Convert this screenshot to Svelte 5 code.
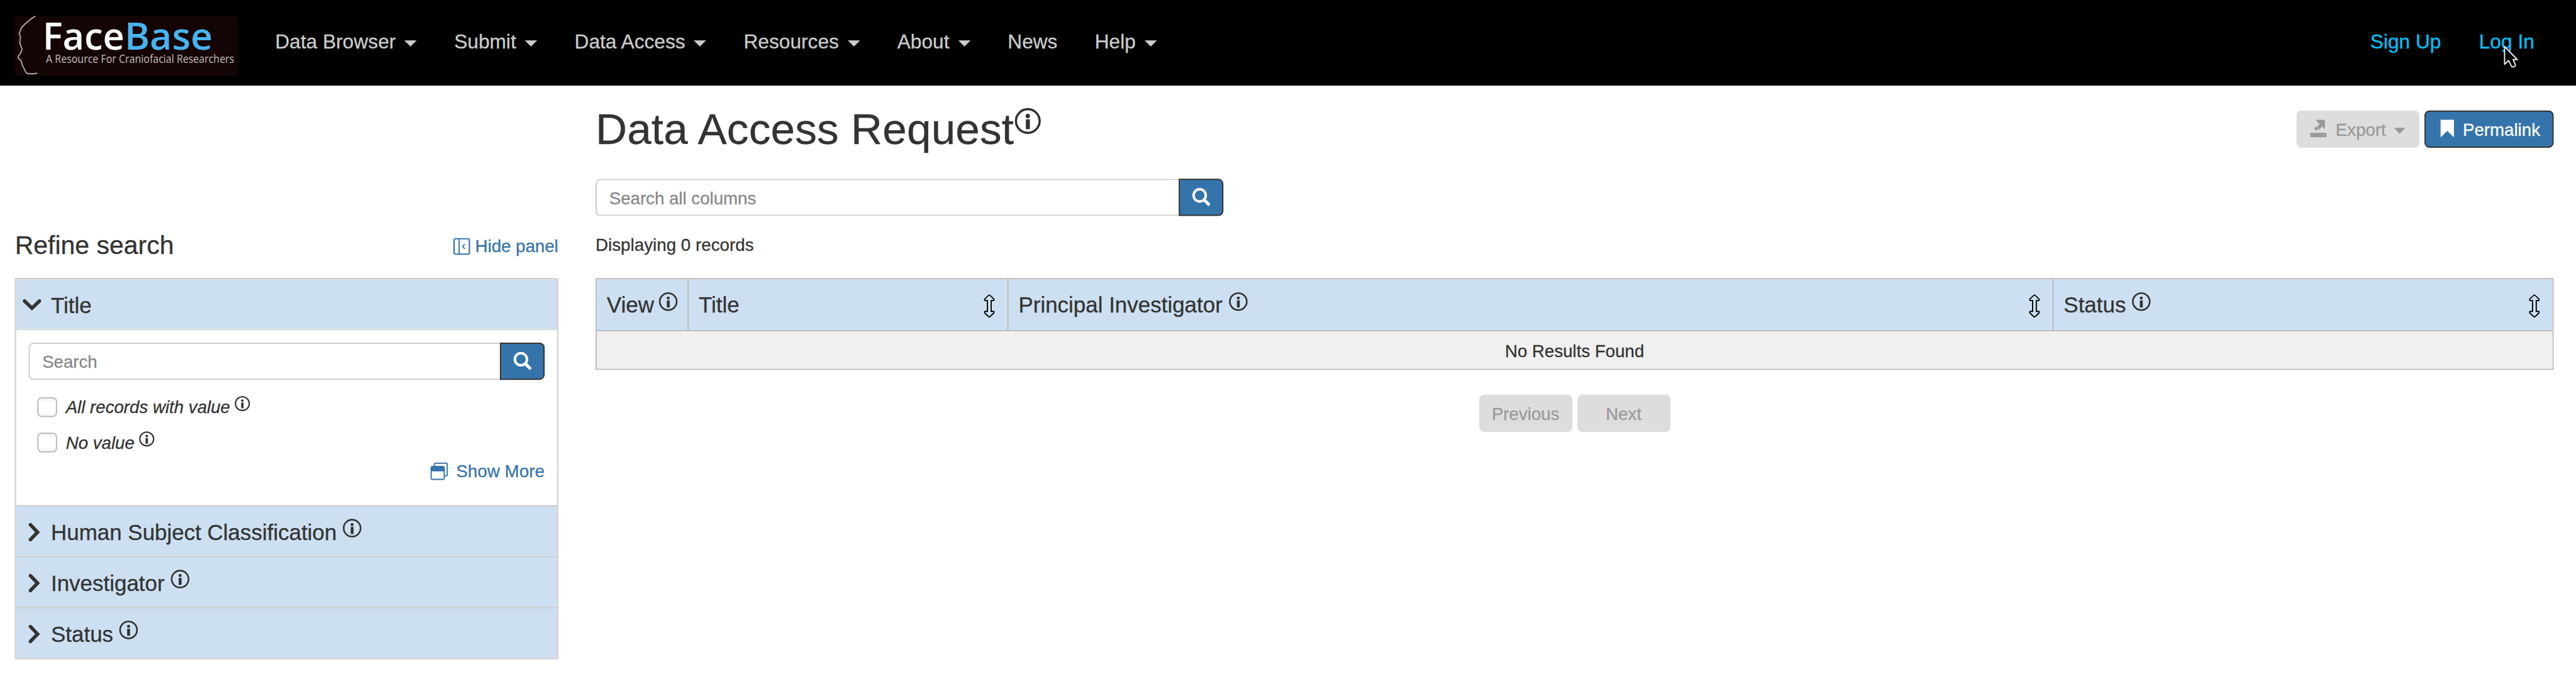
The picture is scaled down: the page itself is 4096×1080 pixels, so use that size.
<script>
  const menu = [
    { label: 'Data Browser', drop: true },
    { label: 'Submit', drop: true },
    { label: 'Data Access', drop: true },
    { label: 'Resources', drop: true },
    { label: 'About', drop: true },
    { label: 'News', drop: false },
    { label: 'Help', drop: true }
  ];
  const choices = ['All records with value', 'No value'];
  const closedFacets = ['Human Subject Classification', 'Investigator', 'Status'];
  const columns = [
    { label: 'View', info: true, sort: false },
    { label: 'Title', info: false, sort: true },
    { label: 'Principal Investigator', info: true, sort: true },
    { label: 'Status', info: true, sort: true }
  ];
</script>

{#snippet info(size)}
  <svg class="info {size}" viewBox="0 0 24 24">
    <circle cx="12" cy="12" r="10.9" fill="none" stroke="currentColor" stroke-width="2.1" />
    <circle cx="12" cy="7.4" r="2" fill="currentColor" />
    <path d="M10.2 10.4h3.7v9.1h-3.7z" fill="currentColor" />
  </svg>
{/snippet}

{#snippet searchButton()}
  <button class="search-btn" aria-label="Search">
    <svg width="29" height="29" viewBox="0 0 29 29">
      <circle cx="11.8" cy="11.8" r="9.8" fill="none" stroke="#fff" stroke-width="4" />
      <path d="M19 19l7 7" stroke="#fff" stroke-width="5" stroke-linecap="round" />
    </svg>
  </button>
{/snippet}

<div class="page">
  <header>
    <svg class="logo" width="360" height="96" viewBox="0 0 360 96">
      <rect width="360" height="96" fill="#140504" />
      <path
        d="M33 0C27 3 22 8 17 12C13 16 9 19 8.500 24L7 28L9 33L8 42L9 47L11.500 53L10 58L6 64L5 67L10 72L12 79L15 85L18 91C21 94 30 93 36 92"
        fill="none" stroke="#aaa5a3" stroke-width="2" stroke-linejoin="round" />
      <g class="brand">
        <text class="name" x="44.500" y="54.500" font-size="60" textLength="132" lengthAdjust="spacingAndGlyphs" fill="#fff">Face</text>
        <text class="name" x="176.500" y="54.500" font-size="60" textLength="142" lengthAdjust="spacingAndGlyphs" fill="#48b4f0">Base</text>
        <text class="tagline" x="50" y="75.500" font-size="19" textLength="303" lengthAdjust="spacingAndGlyphs" fill="#c4bfbd">A Resource For Craniofacial Researchers</text>
      </g>
    </svg>
    <nav>
      {#each menu as item}
        <a href="#top">{item.label}{#if item.drop}<span class="caret"></span>{/if}</a>
      {/each}
    </nav>
    <div class="account">
      <a href="#signup">Sign Up</a>
      <a href="#login">Log In
        <svg class="cursor" width="25" height="38" viewBox="-2 -2 25 38">
          <path d="M0 0V28.500L6.500 22.500L11 31.500Q12.500 33.500 15.500 32.500Q18 31 17.200 29L13.800 21H20.500Z"
            fill="#000" stroke="#e8e8e8" stroke-width="2" stroke-linejoin="round" />
        </svg>
      </a>
    </div>
  </header>

  <main>
    <aside>
      <div class="refine">
        <h2>Refine search</h2>
        <a class="action" href="#hide">
          <svg width="27" height="28" viewBox="0 0 27 28">
            <rect x="1.200" y="1.700" width="24.600" height="24.800" rx="2.500" fill="none" stroke="currentColor" stroke-width="2.200" />
            <path d="M9.300 2v24" stroke="currentColor" stroke-width="2" />
            <path d="M18.500 10.500l-3.600 3.700l3.600 3.700" fill="none" stroke="currentColor" stroke-width="1.800" />
          </svg>Hide panel
        </a>
      </div>

      <section class="facets">
        <div class="facet open">
          <svg class="down" width="31" height="20" viewBox="0 0 31 20">
            <path d="M3.500 4L15.500 15.500L27.500 4" fill="none" stroke="currentColor" stroke-width="5.600" stroke-linecap="round" />
          </svg>
          <span>Title</span>
        </div>
        <div class="facet-body">
          <div class="search">
            <input placeholder="Search" />
            {@render searchButton()}
          </div>
          <div class="choices">
            {#each choices as choice}
              <label><span class="box"></span><em>{choice}</em>{@render info('small')}</label>
            {/each}
          </div>
          <a class="action more" href="#more">
            <svg width="29" height="29" viewBox="0 0 29 29">
              <path d="M6.500 6V3.500Q6.500 1.300 8.700 1.300H25Q27.200 1.300 27.200 3.500V19.500Q27.200 21.700 25 21.700H23" fill="none" stroke="currentColor" stroke-width="2" />
              <rect x="1.300" y="6.500" width="21" height="20.800" rx="2.200" fill="none" stroke="currentColor" stroke-width="2" />
              <path d="M1.300 14.500V8Q1.300 6.300 3 6.300H20.500Q22.300 6.300 22.300 8V14.500Z" fill="currentColor" />
            </svg>Show More
          </a>
        </div>
        {#each closedFacets as facet}
          <div class="facet">
            <svg class="right" width="20" height="31" viewBox="0 0 20 31">
              <path d="M4 3.500L15.500 15.500L4 27.500" fill="none" stroke="currentColor" stroke-width="5.600" stroke-linecap="round" />
            </svg>
            <span>{facet}</span>{@render info('medium')}
          </div>
        {/each}
      </section>
    </aside>

    <section class="content">
      <div class="title-row">
        <h1>Data Access Request{@render info('large')}</h1>
        <div class="buttons">
          <button class="btn disabled export">
            <svg width="27" height="29" viewBox="0 0 27 29">
              <path d="M8.500 0H22.300Q23.700 0 23.700 1.400V15.500L19.300 11.200L14.700 15.800L10.700 11.700L15.200 7.100Z" fill="currentColor" />
              <path d="M9.300 10.800L13.200 15L10 18.300L6 14.200Z" fill="currentColor" />
              <rect y="21" width="26.300" height="7" rx="1" fill="currentColor" />
              <circle cx="22.600" cy="24" r="1" fill="#ccc" />
            </svg>Export<span class="caret"></span>
          </button>
          <button class="btn primary">
            <svg width="22" height="29" viewBox="0 0 22 29">
              <path d="M0 0H21.500V28.300L10.700 18L0 28.300Z" fill="#fff" />
            </svg>Permalink
          </button>
        </div>
      </div>

      <div class="search main-search">
        <input placeholder="Search all columns" />
        {@render searchButton()}
      </div>
      <p class="count">Displaying 0 records</p>

      <div class="table">
        <div class="thead">
          {#each columns as col}
            <div class="th">
              <span>{col.label}</span>
              {#if col.info}{@render info('medium')}{/if}
              {#if col.sort}
                <svg class="sort" width="18" height="38" viewBox="0 0 18 38">
                  <path d="M9 1.200Q9.700 1.200 16.300 7.800Q17.500 10 15.500 10.300H12V27.700H15.500Q17.500 28 16.300 30.200Q9.700 36.800 9 36.800Q8.300 36.800 1.700 30.200Q.5 28 2.500 27.700H6V10.300H2.500Q.5 10 1.700 7.800Q8.300 1.200 9 1.200Z"
                    fill="none" stroke="#000" stroke-width="1.900" />
                </svg>
              {/if}
            </div>
          {/each}
        </div>
        <div class="empty">No Results Found</div>
      </div>

      <div class="pager">
        <button class="btn disabled">Previous</button>
        <button class="btn disabled">Next</button>
      </div>
    </section>
  </main>
</div>

<style>
  :global(body) { margin: 0; background: #fff; overflow: hidden; }
  .page {
    width: 4148px; height: 1094px; overflow: hidden;
    transform: scale(.98746, .9872); transform-origin: 0 0;
    font: 28px/1.2 "Liberation Sans", Arial, sans-serif; color: #333; background: #fff;
    -webkit-text-stroke: .3px currentColor;
  }
  .page :is(div, section, aside, input, button, span, header, nav, main) { box-sizing: border-box; }
  svg { flex: none; display: block; overflow: visible; }
  a { text-decoration: none; }

  header { height: 138px; background: #000; display: flex; align-items: flex-start; padding: 26px 67px 0 24px; }
  .brand { font-family: "Open Sans", "Noto Sans", sans-serif; -webkit-text-stroke: 0; }
  .name { font-weight: 600; }
  .tagline { font-weight: 500; }
  nav { display: flex; gap: 60px; margin-left: 59px; }
  nav a, .account a { font-size: 32px; letter-spacing: .04px; line-height: 40px; margin-top: 21px; white-space: nowrap; color: #ccc; display: flex; align-items: center; }
  .account { display: flex; gap: 61px; margin-left: auto; }
  .account a { color: #00c4ff; position: relative; }
  .cursor { position: absolute; left: 39px; top: 26px; }
  .caret { width: 0; height: 0; border: 10px solid transparent; border-top-color: currentColor; border-bottom: 0; margin: 6px 0 0 14px; }

  main { display: grid; grid-template-columns: 875px 3153px; column-gap: 60px; padding-left: 24px; }
  aside { padding-top: 232px; }
  .refine { height: 50px; margin-bottom: 28px; display: flex; align-items: center; justify-content: space-between; }
  h2 { margin: 0; font-size: 41.5px; font-weight: 400; }
  .action { color: #3574ab; display: flex; align-items: center; gap: 8px; white-space: nowrap; padding-top: 4px; }

  .facets { border: 2px solid #ccc; box-shadow: 0 2px 3px rgba(0, 0, 0, .06); }
  .facet { height: 82px; border-top: 2px solid #ccc; padding: 2px 0 0 19px; background: #cde0f1; display: flex; align-items: center; font-size: 35.4px; line-height: 44px; }
  .facet.open { border-top: 0; border-bottom: 2px solid #ddd; padding-left: 10px; }
  .facet span { margin-top: 2px; }
  .facet .down { margin-right: 15px; margin-top: 0; }
  .facet .right { margin-right: 17px; }
  .info { color: #333; margin-left: 10px; }
  .info.large { width: 42px; height: 42px; display: inline-block; margin: 0 0 0 1px; vertical-align: 16px; }
  .info.medium { width: 30px; height: 30px; margin-bottom: 12px; }
  .info.small { width: 24.5px; height: 24.5px; margin-left: 7.5px; margin-bottom: 11px; }

  .facet-body { height: 282px; padding: 20px 20px 0; display: flex; flex-direction: column; }
  .search { display: flex; height: 60px; flex: none; }
  input { flex: 1; min-width: 0; height: 60px; border: 2px solid #ccc; border-right: 0; border-radius: 8px 0 0 8px; padding: 4px 20px 0; font: inherit; background: #fff; outline: 0; }
  input::placeholder { color: #888; opacity: 1; }
  .search-btn { width: 72px; height: 60px; border: 2px solid #333; border-radius: 0 8px 8px 0; background: #3574ab; padding: 0 0 2px; display: flex; align-items: center; justify-content: center; }
  .choices { margin: 28px 0 0 14px; display: flex; flex-direction: column; gap: 25px; }
  label { display: flex; align-items: center; height: 32px; }
  em { padding-top: 2px; }
  .box { width: 32px; height: 32px; border: 2px solid #bbb; border-radius: 7px; background: linear-gradient(#f0f0f0, #fff 25%, #fff 75%, #f4f4f4); margin-right: 14px; }
  .more { align-self: flex-end; gap: 12px; margin-top: 10px; letter-spacing: .1px; }

  .title-row { display: flex; justify-content: space-between; height: 150px; }
  h1 { margin: 28px 0 0; height: 84px; font-size: 70.2px; letter-spacing: .14px; line-height: 84px; font-weight: 400; white-space: nowrap; }
  .buttons { display: flex; gap: 8px; padding-top: 40px; }
  .btn { height: 60px; border: 2px solid #ddd; border-radius: 8px; font: inherit; display: flex; align-items: center; justify-content: center; padding: 3px 20px 0; }
  .btn svg { margin: -5px 14px 0 0; }
  .disabled { background: #ddd; color: #999; }
  .export { width: 198px; padding-right: 21px; }
  .export .caret { border-width: 10px 9.5px 0; margin: 3px 0 0 13px; }
  .primary { background: #3574ab; border-color: #333; color: #fff; width: 208px; padding-left: 24px; }
  .main-search { width: 1011px; }
  .count { margin: 30px 0 0; line-height: 34px; letter-spacing: .06px; }

  .table { margin-top: 36px; border: 2px solid #bbb; }
  .thead { display: grid; grid-template-columns: 146px 515px 1683px 805px; height: 84px; border-bottom: 2px solid #bbb; background: #cde0f1; }
  .th { display: flex; align-items: center; padding: 0 20px 6px 16px; border-left: 2px solid #bbb; font-size: 35.4px; line-height: 44px; white-space: nowrap; }
  .th:first-child { border-left: 0; padding-right: 0; }
  .th:first-child .info { margin-left: 8px; }
  .th span { margin-top: 6px; }
  .th .info { margin-bottom: 5px; }
  .th .sort { margin-left: auto; margin-top: 9px; }
  .empty { height: 60px; line-height: 63px; background: #f0f0f0; text-align: center; }
  .pager { display: flex; justify-content: center; gap: 8px; margin-top: 40px; }
  .pager .btn { width: 150px; }
</style>
